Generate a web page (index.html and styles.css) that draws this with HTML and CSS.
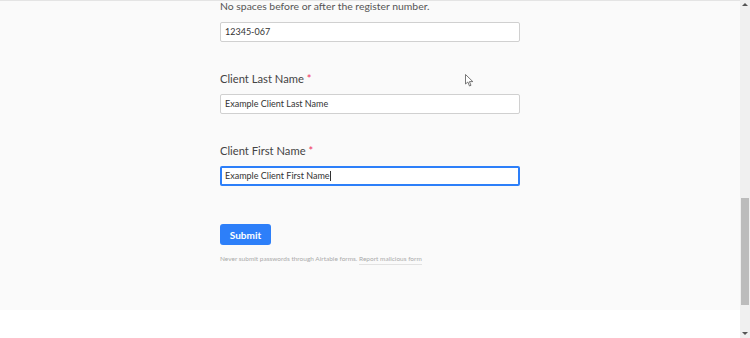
FILE: index.html
```html
<!DOCTYPE html>
<html lang="en">
<head>
    <meta charset="UTF-8">
    <title>Airtable Form</title>
    <link rel="stylesheet" href="styles.css">
</head>
<body>
    <div class="window">
        <div class="page">
            <div class="form-area">
                <div class="form">
                    <div class="field first-field">
                        <p class="help">No spaces before or after the register number.</p>
                        <div class="input">12345-067</div>
                    </div>

                    <div class="field">
                        <label class="label">Client Last Name <span class="required">*</span></label>
                        <div class="input">Example Client Last Name</div>
                    </div>

                    <div class="field">
                        <label class="label">Client First Name <span class="required">*</span></label>
                        <div class="input focused">Example Client First Name<span class="caret"></span></div>
                    </div>

                    <button class="submit">Submit</button>

                    <p class="footer-note">
                        Never submit passwords through Airtable forms.
                        <a class="report" href="#">Report malicious form</a>
                    </p>
                </div>
                <!-- mouse pointer captured in the screenshot -->
                <svg class="pointer" width="9" height="13" viewBox="0 0 9 13">
                    <path d="M0.5 0.5 L0.5 10 L2.8 8 L4.5 12 L6 11.3 L4.4 7.6 L7.8 7.6 Z" fill="#fff" stroke="#555" stroke-width="0.8"/>
                </svg>
            </div>
            <div class="page-bottom"></div>
        </div>
        <div class="scrollbar">
            <div class="arrow up"></div>
            <div class="track">
                <div class="thumb"></div>
            </div>
            <div class="arrow down"></div>
        </div>
    </div>
</body>
</html>
```

FILE: styles.css
```css
html, body {
    margin: 0;
    height: 100%;
}

body {
    font-family: Lato, "Open Sans", Arial, sans-serif;
    color: #333;
    background-color: #fff;
}

.window {
    display: flex;
    height: 338px;
    overflow: hidden;
}

.page {
    flex: 1;
    display: flex;
    flex-direction: column;
}

.form-area {
    position: relative;
    height: 310px;
    background-color: #fafafa;
    border-top: 1px solid #e4e4e4;
    box-sizing: border-box;
}

.form {
    width: 300px;
    margin-left: 220px;
}

.page-bottom {
    flex: 1;
    background-color: #fff;
}

.field {
    margin-bottom: 29px;
}

.help {
    margin: 0 0 10px 0;
    font-size: 10.4px;
    line-height: 11px;
    color: #555;
}

.label {
    display: block;
    font-size: 11.2px;
    line-height: 16px;
    color: #444;
    margin-bottom: 7px;
}

.required {
    color: #ef3061;
}

.input {
    height: 20px;
    box-sizing: border-box;
    border: 1px solid #d0d0d0;
    border-radius: 2px;
    background-color: #fff;
    font-size: 9px;
    line-height: 18px;
    padding: 0 4px;
    color: #333;
}

.input.focused {
    border: 2px solid #2d7ff9;
    line-height: 16px;
    padding: 0 3px;
}

.caret {
    display: inline-block;
    width: 1px;
    height: 10px;
    background-color: #333;
    vertical-align: -2px;
}

.submit {
    display: block;
    margin-top: 38px;
    width: 51px;
    height: 21px;
    border: none;
    border-radius: 3px;
    background-color: #2d7ff9;
    color: #fff;
    font-family: inherit;
    font-weight: 700;
    font-size: 10px;
    padding: 0;
}

.footer-note {
    margin: 9px 0 0 0;
    font-size: 6.5px;
    line-height: 10px;
    color: #aaa;
}

.report {
    color: #aaa;
    text-decoration: none;
    border-bottom: 1px solid #e2e2e2;
    padding-bottom: 2px;
}

.pointer {
    position: absolute;
    left: 465px;
    top: 73px;
}

/* fake browser scrollbar */
.scrollbar {
    width: 10px;
    display: flex;
    flex-direction: column;
    background-color: #f0f0f0;
}

.arrow {
    height: 10px;
    position: relative;
}

.arrow.up::after,
.arrow.down::after {
    content: "";
    position: absolute;
    left: 2px;
    border-left: 3px solid transparent;
    border-right: 3px solid transparent;
}

.arrow.up::after {
    top: 3px;
    border-bottom: 3px solid #555;
}

.arrow.down::after {
    top: 4px;
    border-top: 3px solid #555;
}

.track {
    flex: 1;
    padding-top: 188px;
    padding-left: 1px;
}

.thumb {
    width: 8px;
    height: 107px;
    background-color: #bcbcbc;
}
```
